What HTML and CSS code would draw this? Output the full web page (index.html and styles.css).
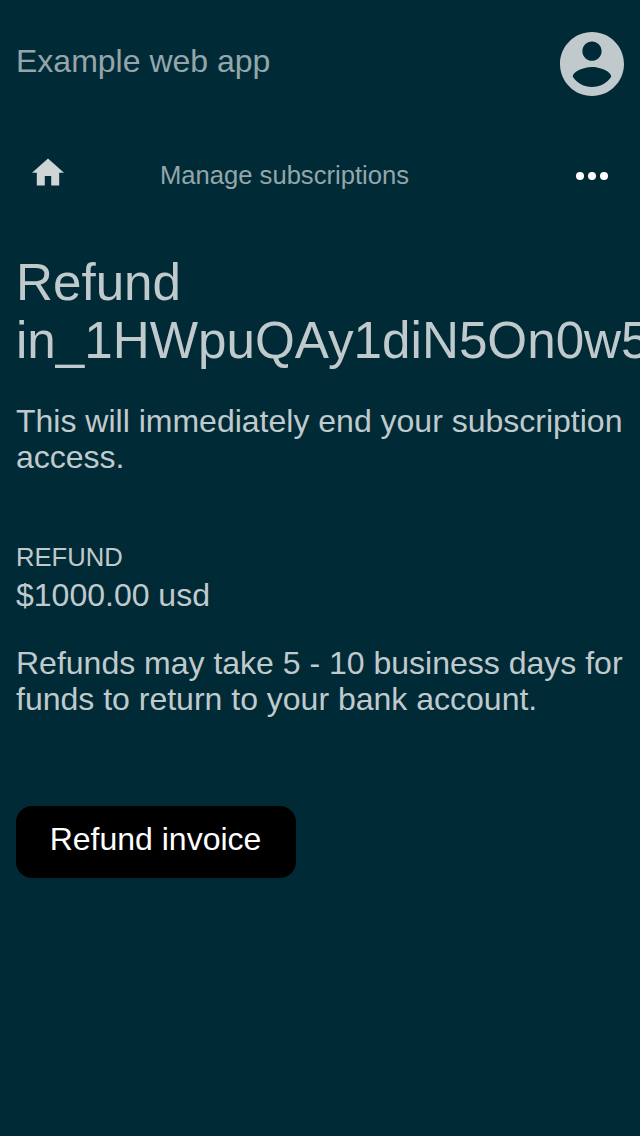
FILE: index.html
```html
<!DOCTYPE html>
<html lang="en">
<head>
<meta charset="utf-8">
<title>Refund invoice</title>
<link rel="stylesheet" href="styles.css">
</head>
<body>
<header class="header">
  <a class="brand">Example web app</a>
  <svg class="account" viewBox="2 2 20 20"><path d="M12 2C6.480 2 2 6.480 2 12s4.480 10 10 10 10-4.480 10-10S17.520 2 12 2zm0 3c1.660 0 3 1.340 3 3s-1.340 3-3 3-3-1.340-3-3 1.340-3 3-3zm0 14.200c-2.500 0-4.710-1.280-6-3.220.030-1.990 4-3.080 6-3.080 1.990 0 5.970 1.090 6 3.080-1.290 1.940-3.500 3.220-6 3.220z"/></svg>
</header>
<nav class="nav">
  <svg class="home" viewBox="2 3 20 17"><path d="M10 20v-6h4v6h5v-8h3L12 3 2 12h3v8z"/></svg>
  <a class="nav-title">Manage subscriptions</a>
  <svg class="more" viewBox="0 0 32 8"><circle cx="4" cy="4" r="4"/><circle cx="16" cy="4" r="4"/><circle cx="28" cy="4" r="4"/></svg>
</nav>
<main class="content">
  <h1 class="title">Refund in_1HWpuQAy1diN5On0w5</h1>
  <p class="notice">This will immediately end your subscription access.</p>
  <div class="label">REFUND</div>
  <div class="amount">$1000.00 usd</div>
  <p class="timing">Refunds may take 5 - 10 business days for funds to return to your bank account.</p>
  <button class="submit">Refund invoice</button>
</main>
</body>
</html>
```

FILE: styles.css
```css
html, body { margin: 0; height: 100%; overflow: hidden; }
body {
  background: #002b36;
  color: #c0cacd;
  font: 32px/36px "Liberation Sans", Arial, sans-serif;
}
.header { display: flex; justify-content: space-between; align-items: center; height: 128px; padding: 0 16px; box-sizing: border-box; }
.brand { color: #94a6ab; padding-bottom: 7px; }
.account { width: 64px; height: 64px; fill: #c0cacd; }
.nav { display: flex; align-items: center; height: 96px; padding: 0 32px; box-sizing: border-box; }
.home { width: 32px; height: 28px; margin-bottom: 8px; fill: #cdd5d7; }
.nav-title { flex: 1; margin-left: 96px; padding-bottom: 2px; color: #94a6ab; font-size: 25.6px; }
.more { width: 32px; height: 8px; fill: #fff; }
.content { padding: 30px 16px 0; }
.title { margin: 0; font-size: 51.2px; line-height: 58px; font-weight: 400; }
.notice { margin: 33px 0 0; }
.label { margin-top: 67px; font-size: 25.6px; line-height: 30px; }
.amount { margin-top: 5px; }
.timing { margin: 32px 0 0; }
.submit { display: block; width: 280px; height: 72px; margin: 89px 0 0; padding: 0 1px 7px 0; border: 0; border-radius: 16px; background: #000; color: #fff; font: inherit; }
```
